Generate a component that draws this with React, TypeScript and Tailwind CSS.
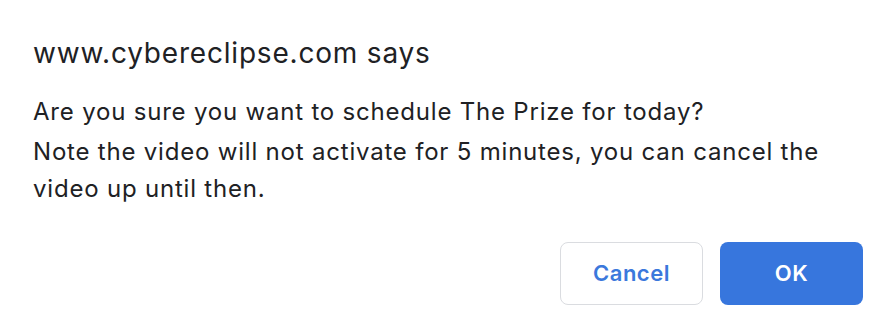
const App = () => {
  return (
    <div
      className="w-[890px] h-[336px] bg-white flex flex-col"
      style={{ fontFamily: "Inter, 'Noto Sans', sans-serif" }}
    >
      {/* Message */}
      <div className="px-[33px] pt-[35px] text-[#202124]">
        <h1 className="text-[28px] leading-[36px] font-normal tracking-[0.8px]">www.cybereclipse.com says</h1>
        <p className="mt-[22px] text-[24px] leading-[37px] tracking-[0.8px]">
          Are you sure you want to schedule The Prize for today?
        </p>
        <p className="mt-[3px] text-[24px] leading-[37px] tracking-[0.8px] w-[824px]">
          Note the video will not activate for 5 minutes, you can cancel the video up until then.
        </p>
      </div>

      {/* Actions */}
      <div className="flex justify-end gap-[17px] pr-[27px] mt-auto mb-[31px]">
        <button className="w-[143px] h-[63px] rounded-[8px] border border-[#dadce0] bg-white text-[#3b78dc] text-[22px] tracking-[0.5px] font-semibold">
          Cancel
        </button>
        <button className="w-[143px] h-[63px] rounded-[8px] bg-[#3776dd] text-white text-[22px] tracking-[0.5px] font-semibold">
          OK
        </button>
      </div>
    </div>
  );
};

export default App;
